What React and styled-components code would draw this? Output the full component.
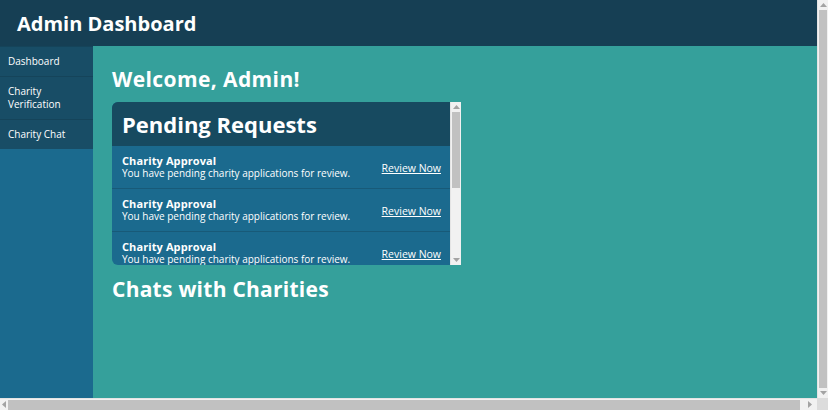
import React from 'react'
import styled, { createGlobalStyle } from 'styled-components'

const GlobalStyle = createGlobalStyle`
  body {
    margin: 0;
    font-family: "Open Sans", "Liberation Sans", sans-serif;
    overflow: hidden;
  }
`

const Frame = styled.div`
  height: 100vh;
  display: grid;
  grid-template-columns: 1fr 11px;
  grid-template-rows: 1fr 12px;
`

const Viewport = styled.div`
  overflow: hidden;
  min-width: 0;
  min-height: 0;
`

const Page = styled.div`
  height: 100%;
  display: flex;
  flex-direction: column;
  background: #35a09b;
`

const TopBar = styled.header`
  height: 46px;
  flex-shrink: 0;
  background: #163f54;
  display: flex;
  align-items: center;
  padding-left: 17px;
  h1 {
    margin: 0;
    color: #fff;
    font-size: 20px;
    font-weight: 700;
  }
`

const Body = styled.div`
  flex: 1;
  display: flex;
`

const Sidebar = styled.nav`
  width: 93px;
  flex-shrink: 0;
  background: #1b6a8e;
  display: flex;
  flex-direction: column;
`

const NavItem = styled.a`
  display: block;
  background: #184d66;
  color: #fff;
  font-size: 10px;
  line-height: 13px;
  padding: 8px 8px;
  border-top: 1px solid #15445a;
`

const Main = styled.main`
  flex: 1;
  padding: 21px 19px;
  color: #fff;
`

const Heading = styled.h2`
  margin: ${p => p.$mt || 0}px 0 0;
  font-size: 21px;
  line-height: 25px;
  font-weight: 700;
  letter-spacing: ${p => p.$ls || 0.4}px;
`

const Panel = styled.section`
  width: 349px;
  height: 163px;
  margin-top: 10px;
  display: flex;
  background: #1b6a8e;
  border-radius: 6px 0 0 6px;
  overflow: hidden;
`

const PanelScroll = styled.div`
  flex: 1;
  overflow: hidden;
`

const PanelHead = styled.div`
  background: #174a60;
  height: 44px;
  display: flex;
  align-items: center;
  padding-left: 10px;
  font-size: 22px;
  font-weight: 700;
`

const Request = styled.div`
  height: 42px;
  border-bottom: 1px solid #185a78;
  display: flex;
  align-items: center;
  justify-content: space-between;
  padding: 0 9px 0 10px;
`

const ReqText = styled.div`
  strong {
    display: block;
    font-size: 11px;
    line-height: 13px;
    letter-spacing: 0.1px;
  }
  span {
    display: block;
    font-size: 10px;
    line-height: 13px;
  }
`

const ReviewLink = styled.a`
  color: #fff;
  font-size: 10.5px;
  text-decoration: underline;
  margin-top: 2px;
`

const Track = styled.div`
  box-sizing: border-box;
  display: flex;
  flex-direction: ${p => (p.$horizontal ? 'row' : 'column')};
  background: #f1f1f1;
  ${p => (p.$horizontal
    ? 'border-top: 1px solid #e4e4e4;'
    : 'width: 11px; border-left: 1px solid #e4e4e4;')}
  flex-shrink: 0;
`

const Arrow = styled.div`
  flex: 0 0 ${p => p.$len || 10}px;
  display: flex;
  align-items: center;
  justify-content: center;
`

const Thumb = styled.div`
  flex: 0 0 ${p => p.$size}px;
  background: #c1c1c1;
  margin: ${p => (p.$horizontal ? '1px 0 0' : '0 1px')};
`

const Rest = styled.div`
  flex: 1;
`

const Corner = styled.div`
  background: #dcdcdc;
`

const Tri = ({ dir }) => {
  const pts = {
    up: '0,4 3.5,0 7,4',
    down: '0,0 7,0 3.5,4',
    left: '4,0 4,7 0,3.5',
    right: '0,0 4,3.5 0,7'
  }[dir]
  const vertical = dir === 'up' || dir === 'down'
  return (
    <svg width={vertical ? 7 : 4} height={vertical ? 4 : 7}>
      <polygon points={pts} fill="#a3a3a3" />
    </svg>
  )
}

const ScrollBar = ({ horizontal, thumb }) => (
  <Track $horizontal={horizontal}>
    <Arrow $len={horizontal ? 8 : 10}>
      <Tri dir={horizontal ? 'left' : 'up'} />
    </Arrow>
    <Thumb $size={thumb} $horizontal={horizontal} />
    <Rest />
    <Arrow $len={horizontal ? 14 : 10}>
      <Tri dir={horizontal ? 'right' : 'down'} />
    </Arrow>
  </Track>
)

const requests = [1, 2, 3]

export default function App() {
  return (
    <Frame>
      <GlobalStyle />
      <Viewport>
        <Page>
          <TopBar>
            <h1>Admin Dashboard</h1>
          </TopBar>
          <Body>
            <Sidebar>
              <NavItem>Dashboard</NavItem>
              <NavItem>Charity<br />Verification</NavItem>
              <NavItem>Charity Chat</NavItem>
            </Sidebar>
            <Main>
              <Heading>Welcome, Admin!</Heading>
              <Panel>
                <PanelScroll>
                  <PanelHead>Pending Requests</PanelHead>
                  {requests.map(r => (
                    <Request key={r}>
                      <ReqText>
                        <strong>Charity Approval</strong>
                        <span>You have pending charity applications for review.</span>
                      </ReqText>
                      <ReviewLink href="#">Review Now</ReviewLink>
                    </Request>
                  ))}
                </PanelScroll>
                <ScrollBar thumb={76} />
              </Panel>
              <Heading $mt={12} $ls={0.25}>Chats with Charities</Heading>
            </Main>
          </Body>
        </Page>
      </Viewport>
      <ScrollBar thumb={378} />
      <ScrollBar horizontal thumb={792} />
      <Corner />
    </Frame>
  )
}
